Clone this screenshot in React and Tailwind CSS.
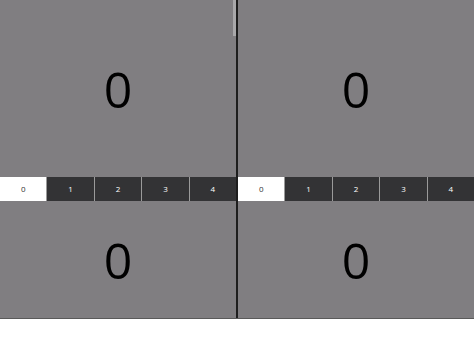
import React from "react";

const tabs = ["0", "1", "2", "3", "4"];

function Pane({ scroll }) {
  return (
    <div className="relative flex flex-1 flex-col">
      <div className="flex h-[177px] items-center justify-center bg-[#807e81]">
        <span className="text-[50px] leading-none text-black">0</span>
      </div>
      <div className="flex h-6 bg-[#333335]">
        {tabs.map((t, i) => (
          <div
            key={t}
            className={
              i === 0
                ? "flex flex-1 items-center justify-center bg-white text-[8px] text-[#333]"
                : "flex flex-1 items-center justify-center border-l border-[#9a9a9a] text-[8px] text-white first:border-l-0"
            }
          >
            {t}
          </div>
        ))}
      </div>
      <div className="flex h-[117px] items-center justify-center bg-[#807e81]">
        <span className="text-[50px] leading-none text-black">0</span>
      </div>
      {scroll && (
        <div className="absolute right-0 top-0 h-9 w-[3px] bg-[#a9a8aa]" />
      )}
    </div>
  );
}

export default function App() {
  return (
    <div
      className="h-[355px] w-full bg-white"
      style={{ fontFamily: "'Open Sans', 'Noto Sans', sans-serif" }}
    >
      <div className="flex border-b border-[#5a5a5a]">
        <Pane scroll />
        <div className="w-[2px] bg-[#1e1e1e]" />
        <Pane />
      </div>
    </div>
  );
}
